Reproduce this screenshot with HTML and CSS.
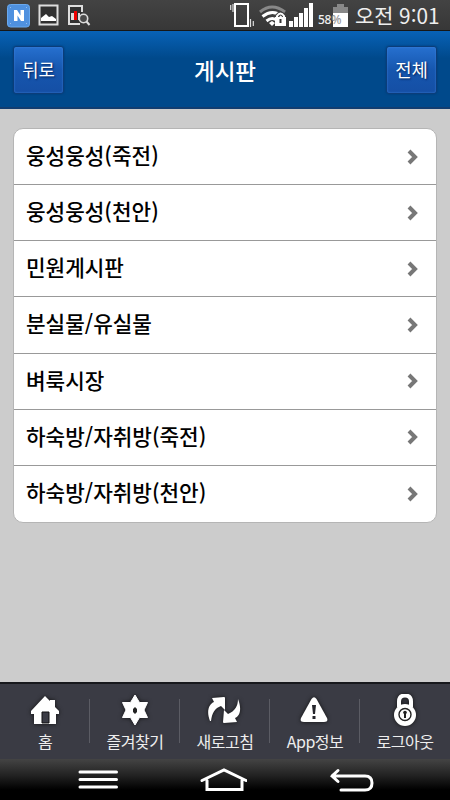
FILE: index.html
```
<!DOCTYPE html>
<html lang="ko">
<head>
  <meta charset="UTF-8">
  <meta name="viewport" content="width=device-width, initial-scale=1.0">
  <title>게시판</title>
  <link rel="stylesheet" href="styles.css">
</head>
<body>
  <div class="status-bar">
    <div class="notifications">
      <svg width="23" height="24" viewBox="0 0 23 24">
        <rect x="0.5" y="0.5" width="22" height="22.5" rx="3" fill="#4f91df" stroke="#69a8ed"/>
        <path d="M3.5 3.5h.5M19 3.5h.5M3.5 19.5h.5M19 19.5h.5" stroke="#d7e8fb"/>
        <path d="M7 17V6h3l3.500 5.500V6H17v11h-3l-3.500-5.500V17z" fill="#fff"/>
      </svg>
      <svg width="21" height="22" viewBox="0 0 21 22">
        <rect x="1.5" y="1.5" width="18" height="19" fill="#303030" stroke="#ddd" stroke-width="2"/>
        <path d="M3 17v-3l5-4 3 3 3-1 4 3v2z" fill="#fff"/>
      </svg>
      <svg width="24" height="22" viewBox="0 0 24 22">
        <path d="M15 8V2H2v18h11" fill="#303030" stroke="#ddd" stroke-width="2"/>
        <path d="M4 16V9h3v7z" fill="#ddd"/><path d="M7 16V7h3v9z" fill="#e00"/><path d="M11 16V9h2v7z" fill="#ddd"/>
        <circle cx="16.5" cy="14.5" r="4.2" fill="#4a4a4a" stroke="#ddd" stroke-width="1.6"/>
        <path d="M19.5 17.5l3 3.5" stroke="#ddd" stroke-width="2"/>
      </svg>
    </div>
    <div class="indicators">
      <svg class="vibrate" width="24" height="25" viewBox="0 0 24 25">
        <rect x="5" y="1" width="13" height="22" fill="none" stroke="#fff" stroke-width="2"/>
        <path d="M0.700 2v5M3 1v8M20.500 16v8M23.300 18v5" stroke="#ddd" stroke-width="1.2"/>
      </svg>
      <svg class="wifi" width="28" height="22" viewBox="0 0 28 22">
        <g fill="none" stroke-width="3">
          <path d="M1 7q12-10 25 0" stroke="#888"/>
          <path d="M3.5 11.5q10-8 20 0M7.5 16q6-5 11 0" stroke="#fff"/>
        </g>
        <path d="M10 18l3-2 3 2-3 3z" fill="#fff"/>
        <path d="M18 13v-2q3.500-5 7 0v2" fill="none" stroke="#444" stroke-width="4"/>
        <rect x="16" y="12" width="11" height="9" fill="#fff"/>
        <path d="M18 13v-2q3.500-5 7 0v2" fill="none" stroke="#fff" stroke-width="2"/>
        <path d="M21.5 14v4" stroke="#333" stroke-width="2"/>
      </svg>
      <svg class="signal" width="25" height="24" viewBox="0 0 25 24">
        <path d="M0 18h4v6H0zM5 14h4v10H5zM10 10h4v14h-4zM15 5h4v19h-4zM20 0h4v24h-4z" fill="#fff"/>
      </svg>
      <span class="percent">58<span class="sign">%</span></span>
      <svg class="battery" width="15" height="23" viewBox="0 0 15 23">
        <path d="M4 0h7v3h4v6H0V3h4z" fill="#888"/><path d="M0 9h15v14H0z" fill="#fff"/>
      </svg>
      <span class="clock">오전 9:01</span>
    </div>
  </div>

  <header class="header">
    <button class="btn">뒤로</button>
    <h1>게시판</h1>
    <button class="btn">전체</button>
  </header>

  <main class="content">
    <ul class="board-list">
      <li><a href="#">웅성웅성(죽전)</a><svg class="arrow" viewBox="0 0 12 16"><path d="M2 2l6 6-6 6"/></svg></li>
      <li><a href="#">웅성웅성(천안)</a><svg class="arrow" viewBox="0 0 12 16"><path d="M2 2l6 6-6 6"/></svg></li>
      <li><a href="#">민원게시판</a><svg class="arrow" viewBox="0 0 12 16"><path d="M2 2l6 6-6 6"/></svg></li>
      <li><a href="#">분실물/유실물</a><svg class="arrow" viewBox="0 0 12 16"><path d="M2 2l6 6-6 6"/></svg></li>
      <li><a href="#">벼룩시장</a><svg class="arrow" viewBox="0 0 12 16"><path d="M2 2l6 6-6 6"/></svg></li>
      <li><a href="#">하숙방/자취방(죽전)</a><svg class="arrow" viewBox="0 0 12 16"><path d="M2 2l6 6-6 6"/></svg></li>
      <li><a href="#">하숙방/자취방(천안)</a><svg class="arrow" viewBox="0 0 12 16"><path d="M2 2l6 6-6 6"/></svg></li>
    </ul>
  </main>

  <nav class="tab-bar">
    <a class="tab" href="#">
      <svg viewBox="0 0 32 34"><path d="M2 17L16 2l5 5V6h5v7l4 4v3h-3v10H5V20H2z" fill="#fff"/><path d="M13 18h7v11h-7z" fill="#3a3b44" stroke="#111"/></svg>
      <span>홈</span>
    </a>
    <a class="tab" href="#">
      <svg viewBox="0 0 32 34"><path d="M16 1l4.500 7.500H28.500L25 16l3.500 7.500h-8L16 31l-4.500-7.500h-8L7 16 3.500 8.500h8z" fill="#fff" stroke="#fff" stroke-linejoin="round"/><path d="M16 13l2 2v3l-2 2-2-2v-3z" fill="#222"/></svg>
      <span>즐겨찾기</span>
    </a>
    <a class="tab" href="#">
      <svg viewBox="0 0 36 34"><g fill="#fff"><path d="M3 27C-1 17 2 10 7 8L5 4l12-1q1 0 1 1v12l-4-4C8 14 5 19 4 27z"/><path d="M31 5c4 10 2 17-3 19l2 4-13 1q-1 0-1-1l1-12 4 4c7-3 10-8 10-15z"/></g></svg>
      <span>새로고침</span>
    </a>
    <a class="tab" href="#">
      <svg viewBox="0 0 32 34"><path d="M12.500 5q2.500-3.500 5 0l10.500 19q1.500 4-3 4H5q-4.500 0-3-4z" fill="#fff"/><path d="M13 11h4l-1 9h-2zM13.500 22h3v3h-3z" fill="#25262c"/></svg>
      <span>App정보</span>
    </a>
    <a class="tab" href="#">
      <svg viewBox="0 0 32 34"><path d="M10 13V7.500q0-6 6-6t6 6V13" fill="none" stroke="#fff" stroke-width="4"/><circle cx="16" cy="21" r="11" fill="#fff"/><circle cx="16" cy="20.5" r="6" fill="none" stroke="#222" stroke-width="1.4"/><path d="M16 18v6" stroke="#222" stroke-width="2"/><circle cx="16" cy="18.5" r="1.8" fill="#222"/></svg>
      <span>로그아웃</span>
    </a>
  </nav>

  <div class="system-nav">
    <svg width="40" height="22" viewBox="0 0 40 22"><path d="M2 4h36.500M2 11.500h36.500M2 19h36.500"/></svg>
    <svg width="48" height="24" viewBox="0 0 48 24"><path d="M3 12.500L25 2l22 10.500M8 12.500v9h35v-9"/></svg>
    <svg width="46" height="24" viewBox="0 0 46 24"><path d="M10 2.500L4 8l6 5.500M4 8h33q7 0 7 7t-7 7H13"/></svg>
  </div>
</body>
</html>
```
FILE: styles.css
```
* {
  box-sizing: border-box;
}
body {
  font-family: "Noto Sans CJK KR", sans-serif;
  margin: 0;
  height: 800px;
  display: flex;
  flex-direction: column;
  overflow: hidden;
  background: #ccc;
}
a {
  color: inherit;
  text-decoration: none;
}
.status-bar {
  height: 31px;
  display: flex;
  justify-content: space-between;
  background: linear-gradient(#434343, #373737);
  border-bottom: 1px solid #171717;
  color: #eee;
}
.notifications {
  display: flex;
  gap: 8px;
  padding: 4px 0 0 7px;
}
.indicators {
  display: flex;
  padding-right: 11px;
}
.vibrate {
  margin: 3px 5px 0 0;
}
.wifi {
  margin: 5px 2px 0 0;
}
.signal {
  margin: 3px 4px 0 0;
}
.percent {
  position: relative;
  z-index: 1;
  width: 15px;
  font: 500 12px/40px "Noto Sans", sans-serif;
  letter-spacing: -0.3px;
  white-space: nowrap;
}
.sign {
  color: #999;
}
.battery {
  margin: 4px 7px 0 0;
}
.clock {
  width: 84px;
  font-size: 20.8px;
  line-height: 30px;
  white-space: nowrap;
}
.header {
  height: 78px;
  padding: 0 13px;
  display: flex;
  align-items: center;
  justify-content: space-between;
  background: linear-gradient(#0862b7, #00498b 36%, #00498b);
  border-bottom: 2px solid #123d70;
  color: #fff;
}
.header h1 {
  margin: 2px 0 0;
  font-size: 22.5px;
  font-weight: 500;
}
.btn {
  width: 51px;
  height: 48px;
  margin-top: 2px;
  padding: 0 0 2px;
  font: 17.8px "Noto Sans CJK KR", sans-serif;
  color: #fff;
  background: linear-gradient(#2670cf, #1656ae 50%, #154fa5);
  border: 1px solid #0b3d7a;
  border-radius: 3px;
  box-shadow: 0 0 2px #03366e, inset 0 0 2px #4289df;
  text-shadow: 1px 1px 2px #00215a;
}
.content {
  flex: 1;
  padding: 19px 13px;
}
.board-list {
  margin: 0;
  padding: 0;
  list-style: none;
  background: #fff;
  border: 1px solid #b5b5b5;
  border-radius: 10px;
}
.board-list li {
  height: 56.14px;
  padding: 0 17px 0 12px;
  display: flex;
  align-items: center;
  justify-content: space-between;
  border-bottom: 1px solid #999;
  color: #000;
  font-size: 21.3px;
  font-weight: 500;
}
.board-list a {
  padding-bottom: 4px;
}
.board-list li:last-child {
  border-bottom: none;
}
.arrow {
  width: 12px;
  height: 16px;
  fill: none;
  stroke: #777;
  stroke-width: 4;
}
.tab-bar {
  height: 77px;
  display: flex;
  background: #3a3b44;
  border-top: 2px solid #17181c;
  color: #eee;
}
.tab {
  flex: 1;
  display: flex;
  flex-direction: column;
  align-items: center;
  padding-top: 10px;
  font-size: 16px;
  letter-spacing: -0.5px;
  line-height: 26px;
  background: linear-gradient(#5b5c64, #5b5c64) right 15px / 1px 44px no-repeat;
}
.tab:last-child {
  background: none;
}
.tab svg {
  height: 34px;
  filter: drop-shadow(0 0 2px #111);
}
.system-nav {
  height: 41px;
  padding: 9px 76px 0 78px;
  display: flex;
  justify-content: space-between;
  background: linear-gradient(#444, #222 40%, #000 75%);
}
.system-nav svg {
  fill: none;
  stroke: #fff;
  stroke-width: 3;
  stroke-linecap: round;
}
```
